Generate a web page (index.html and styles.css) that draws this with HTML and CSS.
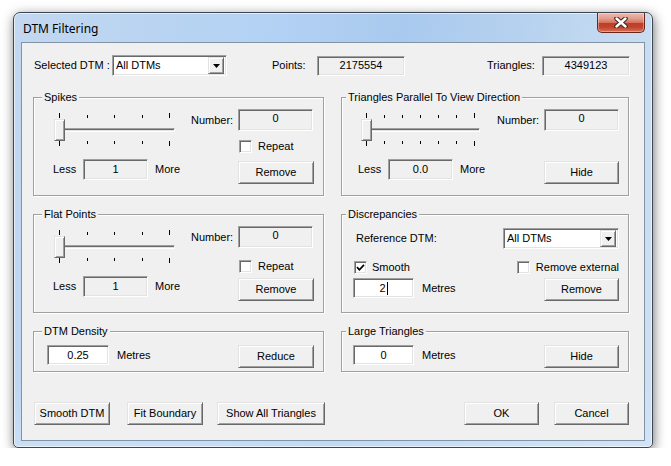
FILE: index.html
```html
<!DOCTYPE html>
<html lang="en">
<head>
<meta charset="utf-8">
<title>DTM Filtering</title>
<link rel="stylesheet" href="styles.css">
</head>
<body>
<div class="desktop">
  <div class="window">
    <div class="titlebar">
      <span class="title">DTM Filtering</span>
      <div class="close-btn" aria-label="Close">
        <svg width="14" height="11" viewBox="0 0 14 11">
          <path d="M2.5 1.5 L11.5 9.5 M11.5 1.5 L2.5 9.5" stroke="#3b2a2a" stroke-width="4.6" stroke-linecap="round" fill="none"/>
          <path d="M2.5 1.5 L11.5 9.5 M11.5 1.5 L2.5 9.5" stroke="#ffffff" stroke-width="2.4" stroke-linecap="round" fill="none"/>
        </svg>
      </div>
    </div>
    <div class="client">
      <div class="toprow">
        <span class="lbl lbl-sel">Selected DTM :</span>
        <div class="combo combo-sel">
          <span class="combo-text">All DTMs</span>
          <span class="combo-btn"><svg width="7" height="4" viewBox="0 0 7 4"><polygon points="0,0 7,0 3.5,4" fill="#000"/></svg></span>
        </div>
        <span class="lbl lbl-points">Points:</span>
        <div class="field field-ro field-count">2175554</div>
        <span class="lbl lbl-tri">Triangles:</span>
        <div class="field field-ro field-count">4349123</div>
      </div>

      <div class="groups">
        <section class="group g-filter">
          <span class="legend">Spikes</span>
          <div class="filter-body">
            <div class="slider-col">
              <div class="slider s5">
                <div class="ticks ticks-top"><i></i><i></i><i></i><i></i><i></i></div>
                <div class="track"><div class="channel"></div><div class="thumb"></div></div>
                <div class="ticks ticks-bottom"><i></i><i></i><i></i><i></i><i></i></div>
              </div>
              <div class="range-row">
                <span class="lbl lbl-less">Less</span>
                <div class="field field-ro field-range">1</div>
                <span class="lbl lbl-more">More</span>
              </div>
            </div>
            <div class="action-col">
              <div class="num-row"><span class="lbl lbl-num">Number:</span><div class="field field-ro field-num">0</div></div>
              <div class="check check-repeat"><span class="box"></span><span>Repeat</span></div>
              <button class="btn btn-side">Remove</button>
            </div>
          </div>
        </section>

        <section class="group g-filter g-tri g-right">
          <span class="legend">Triangles Parallel To View Direction</span>
          <div class="filter-body">
            <div class="slider-col">
              <div class="slider s7">
                <div class="ticks ticks-top"><i></i><i></i><i></i><i></i><i></i><i></i><i></i></div>
                <div class="track"><div class="channel"></div><div class="thumb"></div></div>
                <div class="ticks ticks-bottom"><i></i><i></i><i></i><i></i><i></i><i></i><i></i></div>
              </div>
              <div class="range-row">
                <span class="lbl lbl-less">Less</span>
                <div class="field field-ro field-range">0.0</div>
                <span class="lbl lbl-more">More</span>
              </div>
            </div>
            <div class="action-col">
              <div class="num-row"><span class="lbl lbl-num">Number:</span><div class="field field-ro field-num">0</div></div>
              <button class="btn btn-side btn-hide">Hide</button>
            </div>
          </div>
        </section>

        <section class="group g-filter g-flat">
          <span class="legend">Flat Points</span>
          <div class="filter-body">
            <div class="slider-col">
              <div class="slider s5">
                <div class="ticks ticks-top"><i></i><i></i><i></i><i></i><i></i></div>
                <div class="track"><div class="channel"></div><div class="thumb"></div></div>
                <div class="ticks ticks-bottom"><i></i><i></i><i></i><i></i><i></i></div>
              </div>
              <div class="range-row">
                <span class="lbl lbl-less">Less</span>
                <div class="field field-ro field-range">1</div>
                <span class="lbl lbl-more">More</span>
              </div>
            </div>
            <div class="action-col">
              <div class="num-row"><span class="lbl lbl-num">Number:</span><div class="field field-ro field-num">0</div></div>
              <div class="check check-repeat"><span class="box"></span><span>Repeat</span></div>
              <button class="btn btn-side">Remove</button>
            </div>
          </div>
        </section>

        <section class="group g-disc g-right">
          <span class="legend">Discrepancies</span>
          <div class="disc-ref">
            <span class="lbl lbl-ref">Reference DTM:</span>
            <div class="combo combo-ref">
              <span class="combo-text">All DTMs</span>
              <span class="combo-btn"><svg width="7" height="4" viewBox="0 0 7 4"><polygon points="0,0 7,0 3.5,4" fill="#000"/></svg></span>
            </div>
          </div>
          <div class="disc-checks">
            <div class="check check-smooth">
              <span class="box"><svg width="9" height="9" viewBox="0 0 9 9"><path d="M1 4.2 L3.4 6.8 L8 1.8" stroke="#000" stroke-width="1.7" fill="none"/></svg></span>
              <span>Smooth</span>
            </div>
            <div class="check check-ext"><span class="box"></span><span>Remove external</span></div>
          </div>
          <div class="edit-row">
            <div class="field field-edit field-metres">2<span class="caret"></span></div>
            <span class="lbl lbl-unit">Metres</span>
            <button class="btn btn-right">Remove</button>
          </div>
        </section>

        <section class="group g-density">
          <span class="legend">DTM Density</span>
          <div class="edit-row">
            <div class="field field-edit field-density">0.25</div>
            <span class="lbl lbl-unit">Metres</span>
            <button class="btn btn-right btn-reduce">Reduce</button>
          </div>
        </section>

        <section class="group g-large g-right">
          <span class="legend">Large Triangles</span>
          <div class="edit-row">
            <div class="field field-edit field-metres">0</div>
            <span class="lbl lbl-unit">Metres</span>
            <button class="btn btn-right">Hide</button>
          </div>
        </section>
      </div>

      <div class="actions">
        <button class="btn btn-smooth">Smooth DTM</button>
        <button class="btn btn-fit">Fit Boundary</button>
        <button class="btn btn-show">Show All Triangles</button>
        <button class="btn btn-ok">OK</button>
        <button class="btn btn-cancel">Cancel</button>
      </div>
    </div>
  </div>
</div>
</body>
</html>
```

FILE: styles.css
```css
* { box-sizing: border-box; }

html, body {
  margin: 0;
  padding: 0;
  background: #ffffff;
}

body {
  font-family: "Liberation Sans", Arial, sans-serif;
  font-size: 11px;
  line-height: 13px;
  color: #000;
}

.desktop {
  padding: 12px 0 0 13px;
}

/* ---------- window frame ---------- */
.window {
  width: 640px;
  height: 436px;
  border: 1px solid #3c4753;
  border-radius: 7px 7px 5px 5px;
  background:
    linear-gradient(180deg, rgba(255,255,255,0) 0%, rgba(255,255,255,0) 85%, rgba(210,230,250,.6) 100%),
    linear-gradient(100deg, #c3d8f0 0%, #bad4f1 18%, #b4d2f4 35%, #a9c9ee 55%, #b7d2ef 72%, #c8dcf1 88%, #cfe0f2 100%);
  box-shadow: 1px 3px 12px rgba(0,0,0,.55), inset 0 0 0 1px rgba(255,255,255,.6);
  padding: 0 7px 6px 7px;
  display: flex;
  flex-direction: column;
}

.titlebar {
  flex: none;
  height: 29px;
  display: flex;
  justify-content: space-between;
  align-items: flex-start;
}

.title {
  font-family: "Segoe UI", "Noto Sans", "Open Sans", sans-serif;
  font-size: 12px;
  line-height: 16px;
  margin: 8px 0 0 2px;
  color: #000;
}

.close-btn {
  width: 48px;
  height: 20px;
  border: 1px solid #6b2619;
  border-top: none;
  border-radius: 0 0 5px 5px;
  background: linear-gradient(180deg, #eebbb0 0%, #e19c8c 30%, #d5735f 50%, #c13c25 52%, #c0452e 75%, #d7735c 100%);
  box-shadow: inset 0 0 0 1px rgba(255,255,255,.35);
  display: flex;
  align-items: center;
  justify-content: center;
  padding-bottom: 1px;
}

.client {
  flex: 1;
  background: #f0f0f0;
  border: 1px solid #8393a6;
  padding: 12px 0 0 11px;
}

/* ---------- common controls ---------- */
.lbl {
  white-space: nowrap;
  line-height: 13px;
}

.field {
  display: flex;
  align-items: center;
  justify-content: center;
  border: 1px solid;
  border-color: #a0a0a0 #ffffff #ffffff #a0a0a0;
  box-shadow: inset 1px 1px #696969, inset -1px -1px #e3e3e3;
  white-space: nowrap;
}

.field-ro { background: #f0f0f0; }
.field-edit { background: #ffffff; }

.btn {
  font: inherit;
  color: #000;
  margin: 0;
  padding: 0;
  height: 23px;
  background: #f0f0f0;
  border: 1px solid;
  border-color: #e3e3e3 #696969 #696969 #e3e3e3;
  box-shadow: inset 1px 1px #ffffff, inset -1px -1px #a0a0a0;
  line-height: 13px;
}

.combo {
  display: flex;
  align-items: center;
  height: 21px;
  background: #fff;
  border: 1px solid;
  border-color: #a0a0a0 #ffffff #ffffff #a0a0a0;
  box-shadow: inset 1px 1px #696969, inset -1px -1px #e3e3e3;
  padding: 2px 2px 2px 3px;
}

.combo-text {
  flex: 1;
  white-space: nowrap;
}

.combo-btn {
  width: 16px;
  height: 17px;
  display: flex;
  align-items: center;
  justify-content: center;
  background: #f0f0f0;
  border: 1px solid;
  border-color: #e3e3e3 #696969 #696969 #e3e3e3;
  box-shadow: inset 1px 1px #ffffff, inset -1px -1px #a0a0a0;
}

.check {
  display: flex;
  align-items: center;
  gap: 6px;
  height: 13px;
  white-space: nowrap;
}

.check .box {
  width: 13px;
  height: 13px;
  flex: none;
  background: #fff;
  border: 1px solid;
  border-color: #a0a0a0 #ffffff #ffffff #a0a0a0;
  box-shadow: inset 1px 1px #696969, inset -1px -1px #e3e3e3;
  display: flex;
  align-items: center;
  justify-content: center;
}

/* ---------- top row ---------- */
.toprow {
  display: flex;
  align-items: center;
  height: 21px;
  margin-left: 1px;
}

.lbl-sel { width: 78px; }
.combo-sel { width: 115px; }
.lbl-points { margin-left: 45px; width: 45px; }
.lbl-tri { margin-left: 82px; width: 55px; }
.field-count { width: 88px; height: 20px; }

/* ---------- group boxes ---------- */
.groups {
  margin-top: 21px;
  display: grid;
  grid-template-columns: 291px 288px;
  grid-template-rows: 99px 99px 41px;
  column-gap: 17px;
  row-gap: 18px;
}

.group {
  --pl: 11px;
  --lg: 8px;
  padding: 0 9px 0 var(--pl);
  border: 1px solid #a0a0a0;
  box-shadow: inset 1px 1px #ffffff, 1px 1px #ffffff;
}

.g-right { --lg: 4px; }

.legend {
  display: block;
  width: fit-content;
  height: 13px;
  line-height: 13px;
  margin: -7px 0 0 calc(var(--lg) - var(--pl));
  padding: 0 2px;
  background: #f0f0f0;
  white-space: nowrap;
}

/* filter groups (slider + number) */
.g-filter { --pl: 19px; padding-right: 0; }
.g-tri { --pl: 16px; }

.filter-body {
  margin-top: 5px;
  display: grid;
  grid-template-columns: 138px auto;
}

.g-tri .filter-body { grid-template-columns: 139px auto; }

.slider {
  margin-top: 4px;
  height: 34px;
  display: flex;
  flex-direction: column;
}

.s5 { width: 121px; margin-left: 1px; }
.s7 { width: 119px; margin-left: 3px; }

.ticks {
  height: 6px;
  display: flex;
  justify-content: space-between;
  padding: 0 5px;
}

.ticks i {
  display: block;
  width: 1px;
  height: 3px;
  background: #000;
}

.ticks i:first-child,
.ticks i:last-child { height: 5px; }

.ticks-top { align-items: flex-end; padding-bottom: 1px; }
.ticks-bottom { align-items: flex-start; }

.track {
  position: relative;
  height: 22px;
}

.channel {
  margin-top: 9px;
  height: 4px;
  border-top: 1px solid #a0a0a0;
  border-left: 1px solid #a0a0a0;
  border-bottom: 1px solid #ffffff;
  border-right: 1px solid #ffffff;
  background: #e3e3e3;
  box-shadow: inset 0 1px #696969;
}

.thumb {
  position: absolute;
  left: 0;
  top: 0;
  width: 11px;
  height: 22px;
  background: #f0f0f0;
  border: 1px solid;
  border-color: #e3e3e3 #696969 #696969 #e3e3e3;
  box-shadow: inset 1px 1px #ffffff, inset -1px -1px #a0a0a0;
}

.range-row {
  margin-top: 12px;
  display: flex;
  align-items: center;
  height: 21px;
}

.lbl-less { width: 30px; }
.field-range { width: 65px; height: 21px; }
.lbl-more { margin-left: 7px; }

.action-col {
  display: flex;
  flex-direction: column;
  align-items: flex-start;
}

.num-row {
  display: flex;
  align-items: center;
  height: 22px;
}

.lbl-num { width: 47px; }
.field-num { width: 75px; height: 22px; padding-bottom: 3px; }

.check-repeat { margin: 9px 0 0 48px; }
.g-flat .check-repeat { margin-top: 12px; }

.btn-side {
  margin: 8px 0 0 47px;
  width: 76px;
}

.g-flat .btn-side { margin-top: 5px; }

.btn-hide {
  margin-top: 30px;
  width: 75px;
}

/* discrepancies */
.disc-ref {
  margin-top: 7px;
  height: 21px;
  display: flex;
  align-items: center;
  justify-content: space-between;
}

.lbl-ref { margin-left: 3px; }
.combo-ref { width: 116px; }

.disc-checks {
  margin-top: 12px;
  display: flex;
  justify-content: space-between;
}

.check-smooth { margin-left: 1px; gap: 5px; }

.edit-row {
  margin-top: 4px;
  display: flex;
  align-items: flex-start;
}

.field-metres { width: 61px; height: 20px; }
.field-density { width: 62px; height: 20px; }

.caret {
  display: inline-block;
  width: 1px;
  height: 13px;
  background: #000;
  margin-left: 1px;
}

.lbl-unit {
  margin-left: 8px;
  line-height: 20px;
}

.btn-right {
  margin-left: auto;
  width: 75px;
}

.btn-reduce { width: 76px; }

.g-density { --pl: 13px; }
.g-density .edit-row,
.g-large .edit-row { margin-top: 7px; }

/* ---------- bottom buttons ---------- */
.actions {
  margin-top: 30px;
  margin-left: 1px;
  display: flex;
}

.btn-smooth { width: 76px; }
.btn-fit { width: 76px; margin-left: 17px; }
.btn-show { width: 108px; margin-left: 14px; }
.btn-ok { width: 75px; margin-left: 139px; }
.btn-cancel { width: 75px; margin-left: 15px; }
```
